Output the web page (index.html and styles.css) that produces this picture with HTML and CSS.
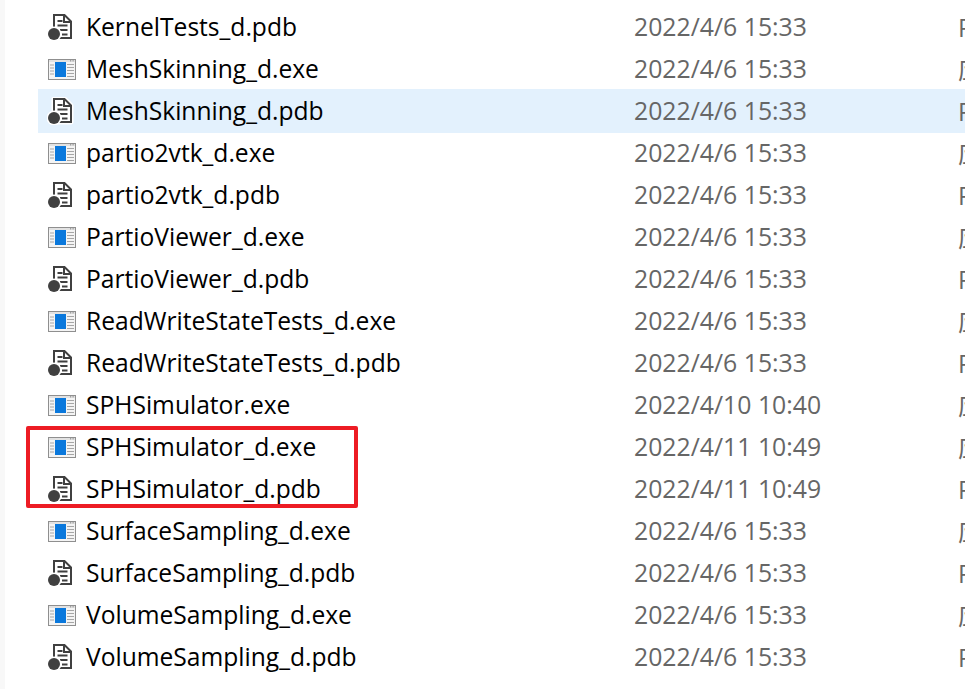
FILE: index.html
```html
<!DOCTYPE html>
<html lang="zh">
<head>
<meta charset="utf-8">
<title>Files</title>
<link rel="stylesheet" href="styles.css">
</head>
<body>
<svg class="defs" width="0" height="0" aria-hidden="true">
  <symbol id="exe" viewBox="0 0 28 21">
    <rect x=".5" y=".5" width="27" height="20" fill="#f4f4f4" stroke="#8f8f8f"/>
    <rect x="1" y="1" width="26" height="2" fill="#e2e2e2"/>
    <rect x="22" y="1.200" width="1.200" height="1.200" fill="#8f8f8f"/><rect x="24.500" y="1.200" width="1.200" height="1.200" fill="#8f8f8f"/>
    <rect x="7" y="3" width="11" height="15" fill="#0a78dc"/>
    <path d="M2 6h4M2 9h4M2 12h4M2 15h4M19 5.500h7M19 8.500h7M19 11.500h7M19 14.500h7M19 17.500h7" stroke="#a6a6a6"/>
  </symbol>
  <symbol id="pdb" viewBox="0 0 28 28">
    <path d="M7 2h10.500L24 8.500V25H7z" fill="#fff" stroke="#fff" stroke-width="5" stroke-linejoin="round"/>
    <path d="M7 2h10.500L24 8.500V25H7z" fill="#fff" stroke="#404040" stroke-width="2"/>
    <path d="M17 2v7h7" fill="none" stroke="#404040" stroke-width="2"/>
    <path d="M10.500 8h5M10.500 12.500h10M13 17h7.500M15 21.500h5.500" stroke="#404040" stroke-width="2"/>
    <circle cx="7" cy="21" r="7.500" fill="#fff"/>
    <circle cx="7" cy="21" r="6" fill="#404040"/>
  </symbol>
</svg>
<main class="list">
  <div class="row"><svg class="icon pdb"><use href="#pdb"/></svg><span class="name">KernelTests_d.pdb</span><span class="date">2022/4/6 15:33</span><span class="type">PDB 文件</span></div>
  <div class="row"><svg class="icon exe"><use href="#exe"/></svg><span class="name">MeshSkinning_d.exe</span><span class="date">2022/4/6 15:33</span><span class="type">应用程序</span></div>
  <div class="row hover"><svg class="icon pdb"><use href="#pdb"/></svg><span class="name">MeshSkinning_d.pdb</span><span class="date">2022/4/6 15:33</span><span class="type">PDB 文件</span></div>
  <div class="row"><svg class="icon exe"><use href="#exe"/></svg><span class="name">partio2vtk_d.exe</span><span class="date">2022/4/6 15:33</span><span class="type">应用程序</span></div>
  <div class="row"><svg class="icon pdb"><use href="#pdb"/></svg><span class="name">partio2vtk_d.pdb</span><span class="date">2022/4/6 15:33</span><span class="type">PDB 文件</span></div>
  <div class="row"><svg class="icon exe"><use href="#exe"/></svg><span class="name">PartioViewer_d.exe</span><span class="date">2022/4/6 15:33</span><span class="type">应用程序</span></div>
  <div class="row"><svg class="icon pdb"><use href="#pdb"/></svg><span class="name">PartioViewer_d.pdb</span><span class="date">2022/4/6 15:33</span><span class="type">PDB 文件</span></div>
  <div class="row"><svg class="icon exe"><use href="#exe"/></svg><span class="name">ReadWriteStateTests_d.exe</span><span class="date">2022/4/6 15:33</span><span class="type">应用程序</span></div>
  <div class="row"><svg class="icon pdb"><use href="#pdb"/></svg><span class="name">ReadWriteStateTests_d.pdb</span><span class="date">2022/4/6 15:33</span><span class="type">PDB 文件</span></div>
  <div class="row"><svg class="icon exe"><use href="#exe"/></svg><span class="name">SPHSimulator.exe</span><span class="date">2022/4/10 10:40</span><span class="type">应用程序</span></div>
  <div class="row"><svg class="icon exe"><use href="#exe"/></svg><span class="name">SPHSimulator_d.exe</span><span class="date">2022/4/11 10:49</span><span class="type">应用程序</span></div>
  <div class="row"><svg class="icon pdb"><use href="#pdb"/></svg><span class="name">SPHSimulator_d.pdb</span><span class="date">2022/4/11 10:49</span><span class="type">PDB 文件</span></div>
  <div class="row"><svg class="icon exe"><use href="#exe"/></svg><span class="name">SurfaceSampling_d.exe</span><span class="date">2022/4/6 15:33</span><span class="type">应用程序</span></div>
  <div class="row"><svg class="icon pdb"><use href="#pdb"/></svg><span class="name">SurfaceSampling_d.pdb</span><span class="date">2022/4/6 15:33</span><span class="type">PDB 文件</span></div>
  <div class="row"><svg class="icon exe"><use href="#exe"/></svg><span class="name">VolumeSampling_d.exe</span><span class="date">2022/4/6 15:33</span><span class="type">应用程序</span></div>
  <div class="row"><svg class="icon pdb"><use href="#pdb"/></svg><span class="name">VolumeSampling_d.pdb</span><span class="date">2022/4/6 15:33</span><span class="type">PDB 文件</span></div>
  <div class="mark"></div>
</main>
</body>
</html>
```
FILE: styles.css
```css
html, body {
  margin: 0;
  height: 100%;
  overflow: hidden;
  background: #fff;
}
.defs {
  position: absolute;
}
.list {
  position: relative;
  box-sizing: border-box;
  height: 689px;
  margin-left: 5px;
  padding: 6px 0 0 33px;
  background: #fff;
  box-shadow: -5px 0 0 #f8f8f8;
  font-family: "Open Sans", "Noto Sans CJK SC", sans-serif;
  font-size: 24.6px;
  color: #000;
  overflow: hidden;
}
.row {
  display: grid;
  grid-template-columns: 48px 548px 324px 200px;
  align-items: center;
  height: 42px;
  white-space: nowrap;
}
.row span {
  position: relative;
  top: -1px;
}
.hover {
  background: #e3f1fd;
  height: 44px;
  margin: -1px 0;
}
.icon {
  justify-self: start;
  display: block;
}
.exe {
  width: 28px;
  height: 21px;
  margin-left: 10px;
}
.pdb {
  width: 28px;
  height: 28px;
  margin-left: 9px;
}
.date,
.type {
  color: #666;
}
.date {
  font-size: 24.8px;
}
.mark {
  position: absolute;
  left: 21px;
  top: 426px;
  width: 324px;
  height: 74px;
  border: 4px solid #ed1c24;
  border-radius: 2px;
}
```
